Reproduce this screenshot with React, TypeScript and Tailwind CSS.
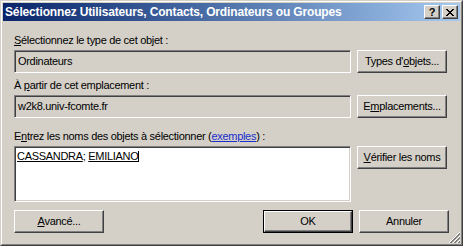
const raised =
  'border border-t-white border-l-white border-r-[#404040] border-b-[#404040] shadow-[inset_-1px_-1px_0_#808080]'
const sunken =
  'border border-t-[#808080] border-l-[#808080] border-r-white border-b-white shadow-[inset_1px_1px_0_#404040,inset_-1px_-1px_0_#d4d0c8]'

const Btn = ({ children, isDefault = false }: { children: React.ReactNode; isDefault?: boolean }) => {
  if (isDefault) {
    return (
      <div className="w-[90px] h-[23px] border border-black">
        <div className={`${raised} w-full h-full flex items-center justify-center`}>{children}</div>
      </div>
    )
  }
  return <div className={`${raised} w-[90px] h-[23px] flex items-center justify-center`}>{children}</div>
}

const TitleBtn = ({ children }: { children: React.ReactNode }) => (
  <div
    className={`${raised} w-[16px] h-[14px] bg-[#d4d0c8] flex items-center justify-center text-black text-[11px] font-bold leading-none tracking-normal`}
  >
    {children}
  </div>
)

const App = () => {
  return (
    <div
      className="w-[463px] h-[246px] bg-[#d4d0c8] text-black text-[11px] leading-[13px] tracking-[-0.3px] border border-t-[#d4d0c8] border-l-[#d4d0c8] border-r-[#404040] border-b-[#404040]"
      style={{ fontFamily: '"Liberation Sans", Arial, sans-serif' }}
    >
      <div className="w-full h-full border border-t-white border-l-white border-r-[#808080] border-b-[#808080] p-px flex flex-col">
        {/* title bar */}
        <div className="h-[18px] shrink-0 flex items-center pl-[2px] pr-[2px] bg-gradient-to-r from-[#0a246a] to-[#a6caf0]">
          <span className="text-white font-bold text-[12px] tracking-[-0.15px] flex-1">
            Sélectionnez Utilisateurs, Contacts, Ordinateurs ou Groupes
          </span>
          <div className="flex gap-[2px]">
            <TitleBtn>?</TitleBtn>
            <TitleBtn>
              <svg width="8" height="7" viewBox="0 0 8 7">
                <path d="M0 0 L7 7 M1 0 L8 7 M7 0 L0 7 M8 0 L1 7" stroke="black" strokeWidth="1" shapeRendering="crispEdges" />
              </svg>
            </TitleBtn>
          </div>
        </div>

        {/* body */}
        <div className="relative flex-1 flex flex-col px-[11px] pt-[13px]">
          <div className="h-[13px] mb-[3px]">
            <span className="underline">S</span>électionnez le type de cet objet :
          </div>
          <div className="flex gap-[6px]">
            <div className={`${sunken} w-[337px] h-[23px] flex items-center pl-[3px]`}>Ordinateurs</div>
            <Btn>
              Types d'<span className="underline">o</span>bjets...
            </Btn>
          </div>

          <div className="h-[13px] mt-[6px] mb-[3px]">
            À <span className="underline">p</span>artir de cet emplacement :
          </div>
          <div className="flex gap-[6px]">
            <div className={`${sunken} w-[337px] h-[23px] flex items-center pl-[3px]`}>w2k8.univ-fcomte.fr</div>
            <Btn>
              E<span className="underline">m</span>placements...
            </Btn>
          </div>

          <div className="h-[13px] mt-[12px] mb-[3px]">
            E<span className="underline">n</span>trez les noms des objets à sélectionner (
            <span className="underline text-[#1a2ecc]">exemples</span>) :
          </div>
          <div className="flex gap-[6px]">
            <div className={`${sunken} w-[337px] h-[56px] bg-white pl-[2px] pt-[3px]`}>
              <span className="underline">CASSANDRA</span>; <span className="underline">EMILIANO</span>
              <span className="inline-block w-px h-[11px] bg-black align-[-2px]" />
            </div>
            <Btn>
              <span className="underline">V</span>érifier les noms
            </Btn>
          </div>

          <div className="flex mt-[8px]">
            <Btn>
              <span className="underline">A</span>vancé...
            </Btn>
            <div className="flex-1" />
            <div className="flex gap-[6px]">
              <Btn isDefault>OK</Btn>
              <Btn>Annuler</Btn>
            </div>
          </div>

          {/* size grip */}
          <svg className="absolute right-0 bottom-0" width="12" height="12" viewBox="0 0 12 12" shapeRendering="crispEdges">
            {[0, 4, 8].map((o) => (
              <g key={o}>
                <path d={`M${o + 1} 12 L12 ${o + 1}`} stroke="white" />
                <path d={`M${o + 2} 12 L12 ${o + 2}`} stroke="#808080" />
                <path d={`M${o + 3} 12 L12 ${o + 3}`} stroke="#808080" />
              </g>
            ))}
          </svg>
        </div>
      </div>
    </div>
  )
}

export default App
